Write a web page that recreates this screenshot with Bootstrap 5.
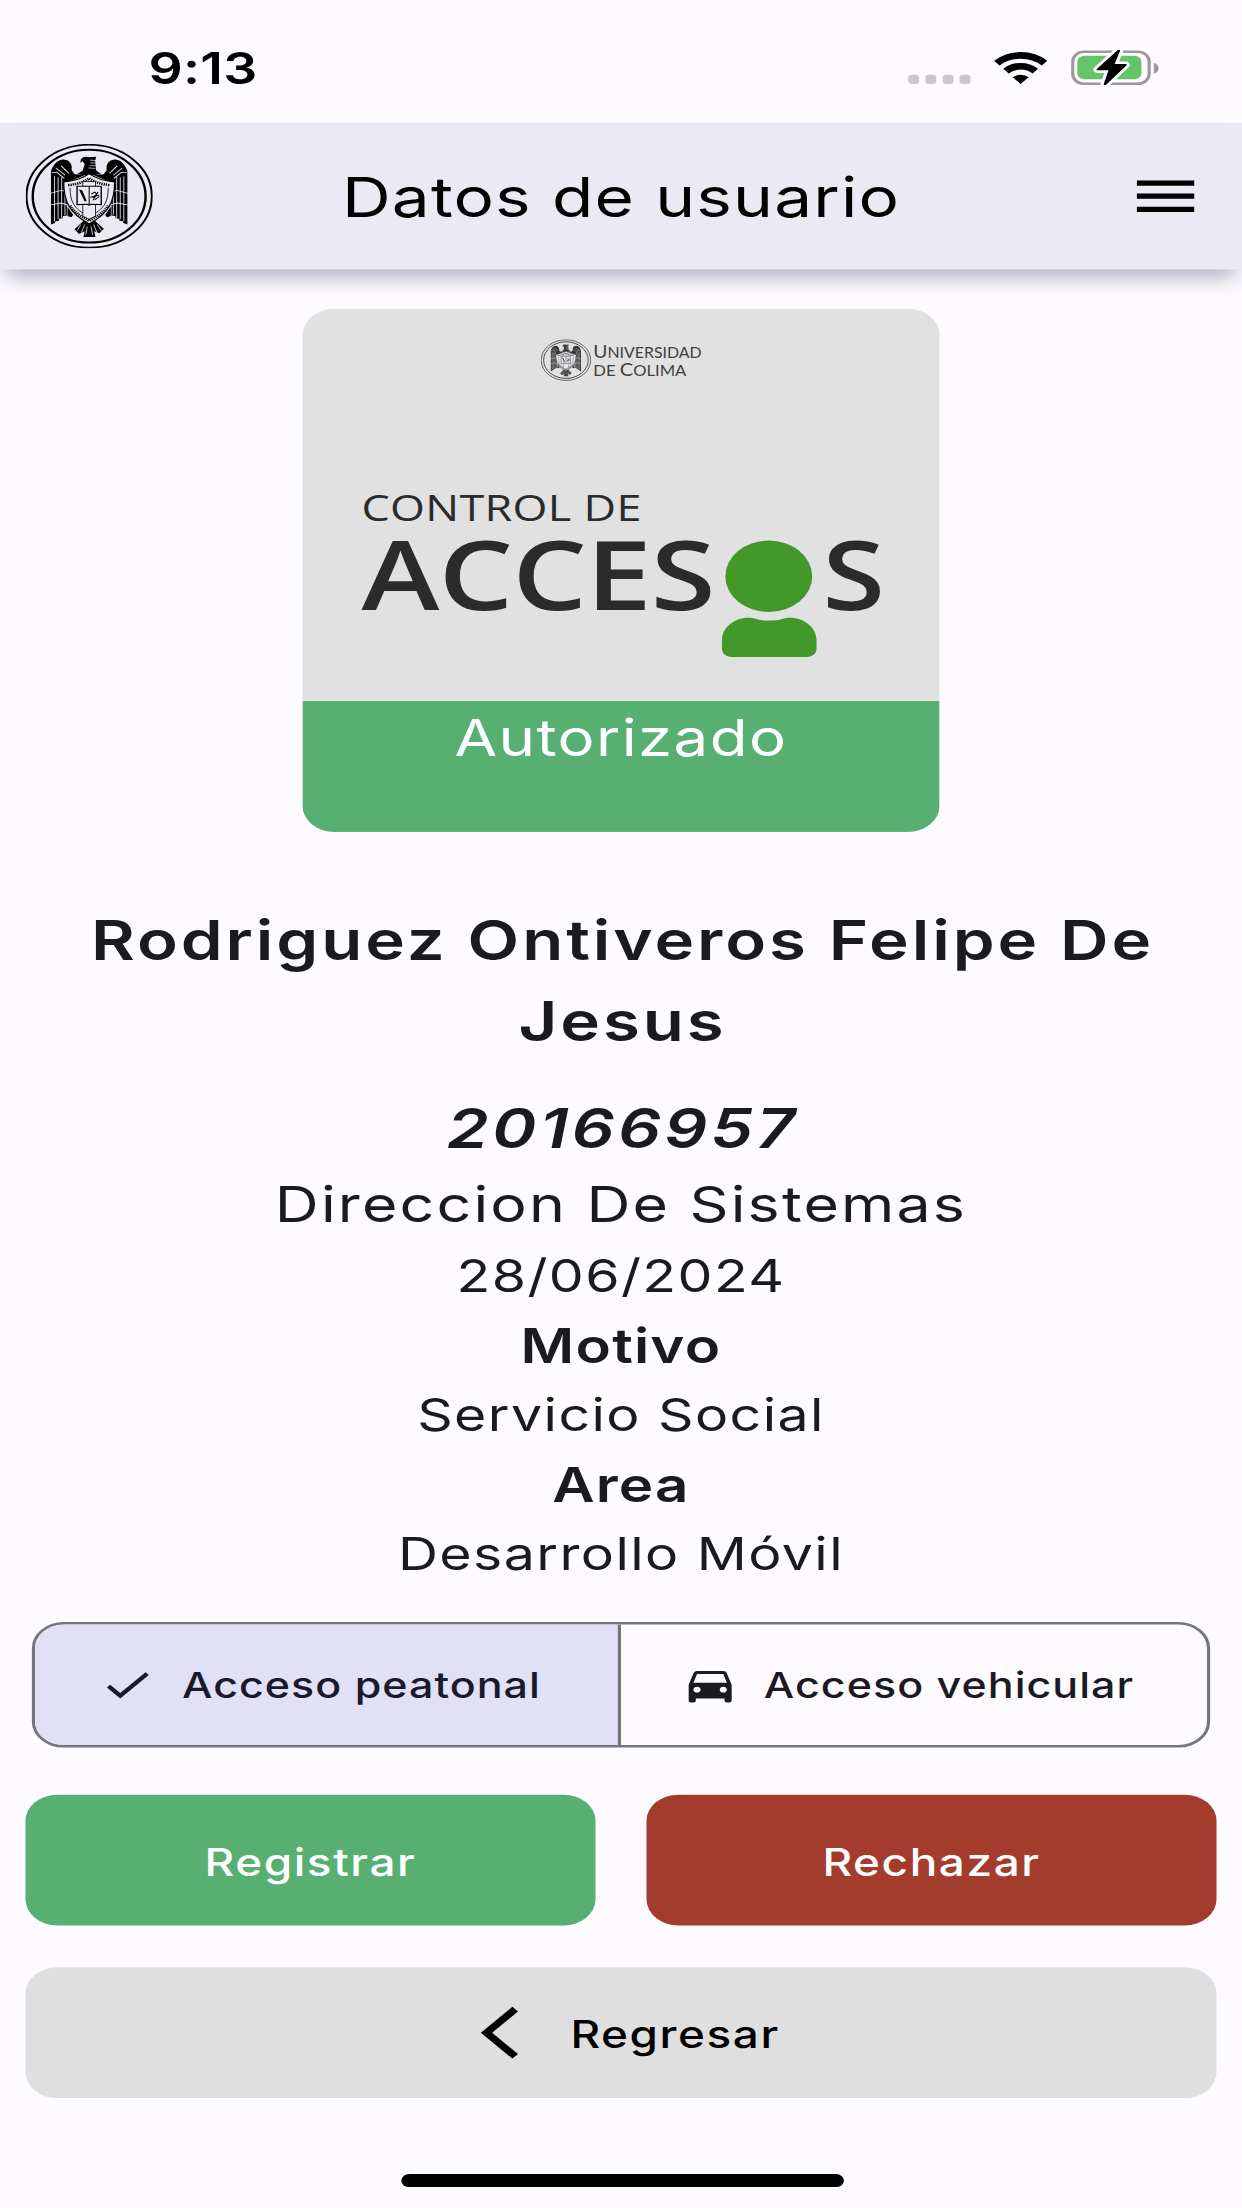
<!DOCTYPE html>
<html lang="es">

<head>
  <meta charset="UTF-8" />
  <meta name="viewport" content="width=device-width, initial-scale=1" />
  <title>Datos de usuario</title>
  <link href="https://cdn.jsdelivr.net/npm/bootstrap@5.3.0/dist/css/bootstrap.min.css" rel="stylesheet" />
  <style>
    html,
    body {
      width: 1242px;
      height: 2208px;
      overflow: hidden;
      background-color: #fdfbff;
    }

    /* 390x844 phone screen stretched over the whole window */
    .pantalla {
      width: 390px;
      height: 844px;
      transform: scale(3.18462, 2.61611);
      transform-origin: 0 0;
      background-color: #fdfbff;
      color: #1b1b1f;
      font-family: Inter, "Liberation Sans", sans-serif;
    }

    .pantalla svg {
      display: block;
      flex-shrink: 0;
    }

    .estado {
      height: 47px;
      padding: 5px 26px 0 46.6px;
      color: #000;
    }

    .hora {
      font-size: 16.8px;
      font-weight: 600;
      line-height: 20px;
      letter-spacing: .1px;
    }

    .barra {
      height: 56px;
      padding: 0 12px 0 8px;
      background-color: #ebe9f4;
      color: #000;
      box-shadow: 0 5px 7px -2px rgba(75, 70, 115, .45);
    }

    .lado {
      width: 50px;
    }

    .titulo {
      font-size: 21.2px;
      line-height: 28px;
      letter-spacing: .37px;
      padding-left: 4px;
    }

    .credencial {
      width: 200px;
      height: 200px;
      margin-top: 15px;
      border-radius: 10px;
      background-color: #e1e1e1;
    }

    .autorizado {
      height: 50px;
      background-color: #57af72;
      font-size: 19.4px;
      line-height: 28px;
      letter-spacing: .45px;
    }

    .datos {
      padding-top: 26px;
      height: 302px;
      font-size: 17.4px;
      line-height: 26.5px;
      letter-spacing: .45px;
    }

    .nombre {
      font-size: 21.1px;
      font-weight: 570;
      line-height: 31px;
      letter-spacing: .92px;
      padding: 0 16px 0 17px;
    }

    .cuenta {
      font-size: 21.1px;
      font-weight: 570;
      line-height: 30px;
      letter-spacing: 1.08px;
      padding: 11px 0 0 1px;
      margin-bottom: -1px;
    }

    .dependencia {
      font-size: 19.1px;
      line-height: 28px;
      letter-spacing: .69px;
      padding-top: 10px;
      margin-top: -.4px;
      padding-top: 0;
    }

    .fecha {
      line-height: 27px;
      letter-spacing: .45px;
    }

    .etiqueta {
      font-size: 18.3px;
      font-weight: 570;
      letter-spacing: .38px;
    }

    .accesos {
      width: 370px;
      height: 48px;
      border: 1px solid #76757f;
      border-radius: 10px;
      font-size: 13.5px;
      font-weight: 500;
      letter-spacing: .32px;
    }

    .opcion {
      width: 50%;
      gap: 8px;
      padding-right: 4px;
    }

    .opcion.elegida {
      background-color: #e2e0f6;
      border-right: 1px solid #76757f;
      color: #1a1a2c;
    }

    .acciones {
      padding: 0 8px;
      margin-top: 18px;
      gap: 16px;
    }

    .boton {
      height: 50px;
      border: 0;
      border-radius: 10px;
      padding: 1.2px 0 0;
      font-size: 14.4px;
      font-weight: 500;
      line-height: 20px;
      letter-spacing: .5px;
    }

    .boton-verde {
      background-color: #57af72;
      color: #fff;
    }

    .boton-rojo {
      background-color: #a33c2c;
      color: #fff;
    }

    .boton-gris {
      background-color: #dfdfdf;
      color: #000;
      gap: 4px;
      padding-left: 6px;
    }

    .boton-gris svg {
      margin-top: -1.2px;
    }

    .inicio {
      width: 139px;
      height: 5px;
      margin-top: 29px;
      border-radius: 3px;
      background-color: #000;
    }
  </style>
</head>

<body>
  <!-- university emblem, shared by the app bar and the card -->
  <svg width="0" height="0" class="position-absolute">
    <defs>
      <g id="ala">
        <path d="M20 26.500C21.500 20 25 15 30 15c5 .5 7 5 6.200 10l2.300 4 8 1-14 7v31.500l-3 .5-.3 2-2.700.5-.3 2-2.700.5-.3 1.500-3.200 1.500z" fill="#000" />
        <path d="M22.800 31v43M25.600 32v40M28.400 32v39M31 37v31" stroke="#ebe9f4" stroke-width=".75" fill="none" />
        <path d="M19 47.500l9-3 4 1M19 58.500l9-2 6 2M20.500 27.500l4-.5 6 6M24 23l7 7M28 21l6 7" stroke="#ebe9f4" stroke-width=".8" fill="none" />
        <path d="M33 60l4.500 8-1.500 2-3-1z" fill="#000" />
      </g>
      <symbol id="escudo" viewBox="0 0 100 100">
        <circle cx="50" cy="50" r="49.200" fill="none" stroke="#000" stroke-width="1.600" />
        <circle cx="50" cy="50" r="44.300" fill="none" stroke="#000" stroke-width="1.900" />
        <use href="#ala" />
        <use href="#ala" transform="translate(100 0) scale(-1 1)" />
        <path d="M43.500 15c.5-2.500 4-3.500 6.500-2.300l5.500-.5-.8 4 .8 9 4 3.800-10 1.500-9-1.500 4.500-3.500 1.500-6-1.500-3-2 1.500z" fill="#000" />
        <path d="M50.500 15.500l5 .5M51 18l4.500.5M50.500 20.500l5 .5M49.500 23l5.500.5" stroke="#ebe9f4" stroke-width=".6" />
        <path d="M46 73h8l7.500 8-3.500 4.500-4-2 1 5.500h-9.500l1-5.500-4.500 2.500-3.500-4.500z" fill="#000" />
        <path d="M46.500 77l-2.500 7.500M53.500 77l2.500 7.500M48.500 79l-1.200 8M51.500 79l1.200 8M43.500 77l-3 6M56.500 77l3 6" stroke="#ebe9f4" stroke-width=".7" />
        <path d="M50 28.500c5 4.500 12 7 20 8C70 54 66 66 50 76.500 34 66 30 54 30 36.500c8-1 15-3.500 20-8z" fill="#ebe9f4" stroke="#000" stroke-width="1" />
        <path d="M33.500 39.500c7-1 12-3 16.500-6.500 4.500 3.500 9.500 5.500 16.500 6.500" fill="none" stroke="#000" stroke-width="2.400" stroke-dasharray="1 .8" />
        <path d="M35 59c3 6 8 10 15 14.500C57 69 62 65 65 59" fill="none" stroke="#000" stroke-width="2.400" stroke-dasharray="1 .8" />
        <path d="M35 42c0 6 .8 12 3 16 2 4 6 8 12 11.500C56 66 60 62 62 58c2.200-4 3-10 3-16" fill="none" stroke="#000" stroke-width=".7" />
        <path d="M45 36h10v33l-5 3-5-3z" fill="#ebe9f4" stroke="#000" stroke-width=".7" />
        <path d="M40.500 40.500h19V58l-8-.3-1.500.8-1.500-.8-8 .3z" fill="#ebe9f4" stroke="#000" stroke-width="1.100" />
        <path d="M50 40.500V58" stroke="#000" stroke-width=".8" />
        <path d="M42 43.500l2.500.8 3.500 10-1.500.8z" fill="#000" />
        <path d="M51.500 48l3-2 1.500 2-3 3 2 2 3-3M53 54l4-8M51 51l7-2" stroke="#000" stroke-width=".9" fill="none" />
      </symbol>
    </defs>
  </svg>

  <div class="pantalla d-flex flex-column">
    <div class="estado d-flex align-items-center justify-content-between">
      <div class="hora">9:13</div>
      <!-- signal dots, wifi and charging battery -->
      <svg width="79" height="14" viewBox="285 19 79 14">
        <g fill="#cac8cc">
          <rect x="285.200" y="28.600" width="3.400" height="3.500" rx="1" />
          <rect x="290.600" y="28.600" width="3.400" height="3.500" rx="1" />
          <rect x="296" y="28.600" width="3.400" height="3.500" rx="1" />
          <rect x="301.300" y="28.600" width="3.400" height="3.500" rx="1" />
        </g>
        <g fill="none" stroke="#000" stroke-width="2.500">
          <path d="M313 24.150a10.900 10.900 0 0 1 15 0" />
          <path d="M315.900 27.150a6.700 6.700 0 0 1 9.200 0" />
        </g>
        <path d="M320.500 32.100l-2.500-2.550a3.600 3.600 0 0 1 5 0z" />
        <rect x="336.850" y="19.800" width="24" height="12.200" rx="3.600" fill="none" stroke="#9b999c" />
        <path d="M362.300 24v4.200c.9-.3 1.500-1.100 1.500-2.100s-.6-1.800-1.500-2.100z" fill="#9b999c" />
        <rect x="338.300" y="21.300" width="20.100" height="9" rx="2.200" fill="#65c466" />
        <path d="M350.900 19.200l-6.500 7.200c-.2.300 0 .5.200.5h3.500l-1.500 5.100c-.1.500.4.700.8.300l6.300-7.300c.2-.3 0-.5-.3-.5h-3.400l1.700-5c.1-.5-.4-.7-.8-.3z" stroke="#fdfbff" stroke-width="2" />
        <path d="M350.900 19.200l-6.500 7.200c-.2.300 0 .5.200.5h3.500l-1.500 5.100c-.1.500.4.700.8.300l6.300-7.300c.2-.3 0-.5-.3-.5h-3.400l1.700-5c.1-.5-.4-.7-.8-.3z" />
      </svg>
    </div>

    <nav class="barra d-flex align-items-center">
      <div class="lado">
        <svg width="40" height="40"><use href="#escudo" /></svg>
      </div>
      <div class="titulo flex-grow-1 text-center">Datos de usuario</div>
      <div class="lado d-flex justify-content-end">
        <svg width="24" height="24" viewBox="0 0 24 24"><path d="M3 18h18v-2H3v2zm0-5h18v-2H3v2zm0-7v2h18V6H3z" /></svg>
      </div>
    </nav>

    <div class="credencial d-flex flex-column mx-auto overflow-hidden">
      <svg width="200" height="150" viewBox="95 118 200 150">
        <use href="#escudo" x="169.800" y="129.700" width="15.800" height="15.900" opacity=".75" />
        <g fill="#3f3f3f" font-family="Lato, sans-serif" font-size="5.600">
          <text x="186.300" y="136.700" textLength="34" lengthAdjust="spacingAndGlyphs"><tspan font-size="6.800">U</tspan>NIVERSIDAD</text>
          <text x="186.300" y="143.700" textLength="29.200" lengthAdjust="spacingAndGlyphs">DE <tspan font-size="6.800">C</tspan>OLIMA</text>
        </g>
        <g fill="#2b2b2b" font-family="Open Sans, Noto Sans, sans-serif">
          <text x="113.500" y="199.200" font-size="14.100" textLength="87.900">CONTROL DE</text>
          <text x="113.500" y="233.200" font-size="37" font-weight="600" textLength="111.200">ACCES</text>
          <text x="258.300" y="233.200" font-size="37" font-weight="600" textLength="19.600" lengthAdjust="spacingAndGlyphs">S</text>
        </g>
        <g fill="#43982a">
          <circle cx="241.400" cy="220.300" r="13.650" />
          <path d="M235 236.100c2.500 0 2.500 1.100 6.500 1.100s4-1.100 6.500-1.100c4.700 0 8.400 4 8.400 8.500v3.500c0 1.700-1.300 3-3 3h-23.700c-1.700 0-3-1.300-3-3v-3.500c0-4.500 3.700-8.500 8.300-8.500z" />
        </g>
      </svg>
      <div class="autorizado text-center text-white">Autorizado</div>
    </div>

    <div class="datos text-center">
      <div class="nombre">Rodriguez Ontiveros Felipe De Jesus</div>
      <div class="cuenta fst-italic">20166957</div>
      <div class="dependencia">Direccion De Sistemas</div>
      <div class="fecha">28/06/2024</div>
      <div class="etiqueta">Motivo</div>
      <div>Servicio Social</div>
      <div class="etiqueta">Area</div>
      <div>Desarrollo Móvil</div>
    </div>

    <div class="accesos d-flex mx-auto overflow-hidden">
      <div class="opcion elegida d-flex align-items-center justify-content-center">
        <svg width="18" height="18" viewBox="0 0 24 24" fill="currentColor"><path d="M9 16.170L4.830 12l-1.420 1.410L9 19 21 7l-1.410-1.410z" /></svg>
        <span>Acceso peatonal</span>
      </div>
      <div class="opcion d-flex align-items-center justify-content-center">
        <svg width="18" height="18" viewBox="0 0 24 24" fill="currentColor"><path d="M18.920 6.010C18.720 5.420 18.160 5 17.500 5h-11c-.660 0-1.210.420-1.420 1.010L3 12v8c0 .550.450 1 1 1h1c.550 0 1-.450 1-1v-1h12v1c0 .550.450 1 1 1h1c.550 0 1-.450 1-1v-8l-2.080-5.990zM6.500 16c-.830 0-1.500-.670-1.500-1.500S5.670 13 6.500 13s1.500.670 1.500 1.500S7.330 16 6.500 16zm11 0c-.830 0-1.500-.670-1.500-1.500s.670-1.500 1.500-1.500 1.500.670 1.500 1.500-.670 1.500-1.500 1.500zM5 11l1.500-4.500h11L19 11H5z" /></svg>
        <span>Acceso vehicular</span>
      </div>
    </div>

    <div class="acciones d-flex">
      <button class="btn boton boton-verde flex-fill w-50">Registrar</button>
      <button class="btn boton boton-rojo flex-fill w-50">Rechazar</button>
    </div>
    <div class="px-2 mt-3 d-grid">
      <button class="btn boton boton-gris d-flex align-items-center justify-content-center">
        <svg width="24" height="24" viewBox="0 0 24 24"><path d="M11.670 3.870L9.900 2.100 0 12l9.900 9.900 1.770-1.770L3.540 12z" /></svg>
        <span>Regresar</span>
      </button>
    </div>

    <div class="inicio mx-auto"></div>
  </div>

  <script src="https://cdn.jsdelivr.net/npm/bootstrap@5.3.0/dist/js/bootstrap.bundle.min.js"></script>
</body>

</html>
